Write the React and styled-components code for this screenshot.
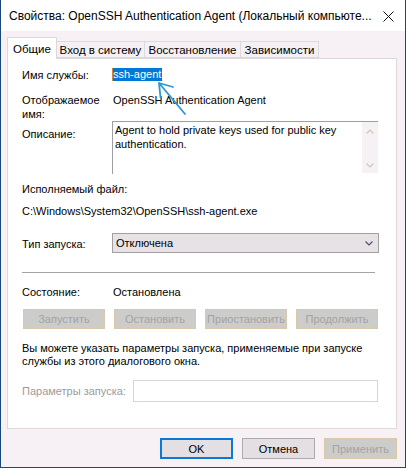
import React from 'react'
import styled, { createGlobalStyle } from 'styled-components'

const GlobalStyle = createGlobalStyle`
    html, body {
        margin: 0;
        padding: 0;
        background: #ffffff;
    }
    body {
        font-family: "Liberation Sans", Arial, sans-serif;
        font-size: 11px;
        color: #000;
    }
`

const tabs = [
    { title: 'Общие', width: 50 },
    { title: 'Вход в систему', width: 88 },
    { title: 'Восстановление', width: 96 },
    { title: 'Зависимости', width: 78 },
]

const actions = ['Запустить', 'Остановить', 'Приостановить', 'Продолжить']

function Chevron({ up, color }) {
    return (
        <svg width="8" height="5" viewBox="0 0 8 5">
            <polyline
                points={up ? '0.5,4.5 4,1 7.5,4.5' : '0.5,0.5 4,4 7.5,0.5'}
                fill="none"
                stroke={color}
                strokeWidth="1.2"
            />
        </svg>
    )
}

function App() {
    return (
        <Window>
            <GlobalStyle />
            <TitleBar>
                <Title>Свойства: OpenSSH Authentication Agent (Локальный компьюте...</Title>
                <Close>
                    <svg width="11" height="11" viewBox="0 0 11 11">
                        <path d="M0.5 0.5 L10.5 10.5 M10.5 0.5 L0.5 10.5" stroke="#111" strokeWidth="1" />
                    </svg>
                </Close>
            </TitleBar>
            <Body>
                <TabRow>
                    {tabs.map((t, i) => (
                        <Tab key={t.title} $w={t.width} $active={i === 0}>{t.title}</Tab>
                    ))}
                </TabRow>
                <Panel>
                    <Field $mt={9}>
                        <Label>Имя службы:</Label>
                        <div><Selected>ssh-agent</Selected></div>
                    </Field>
                    <Field $mt={11}>
                        <Label>Отображаемое<br />имя:</Label>
                        <Value>OpenSSH Authentication Agent</Value>
                    </Field>
                    <Field $mt={0}>
                        <Label $offset={6}>Описание:</Label>
                        <TextArea>
                            <AreaText>Agent to hold private keys used for public key authentication.</AreaText>
                            <ScrollBar>
                                <Chevron up color="#d4c6a8" />
                                <Chevron color="#d4c6a8" />
                            </ScrollBar>
                        </TextArea>
                    </Field>
                    <Line $mt={8}>Исполняемый файл:</Line>
                    <Line $mt={8}>C:\Windows\System32\OpenSSH\ssh-agent.exe</Line>
                    <Field $mt={15}>
                        <Label $offset={1} $lh={20}>Тип запуска:</Label>
                        <Combo>
                            <span>Отключена</span>
                            <Chevron color="#5b4b6e" />
                        </Combo>
                    </Field>
                    <Separator />
                    <Field $mt={12}>
                        <Label>Состояние:</Label>
                        <Value>Остановлена</Value>
                    </Field>
                    <ActionRow>
                        {actions.map(a => (
                            <DisabledButton key={a}>{a}</DisabledButton>
                        ))}
                    </ActionRow>
                    <Paragraph>
                        Вы можете указать параметры запуска, применяемые при запуске<br />
                        службы из этого диалогового окна.
                    </Paragraph>
                    <Field $mt={12} $col={111}>
                        <Label $dim $lh={22}>Параметры запуска:</Label>
                        <ParamInput />
                    </Field>
                </Panel>
                <Footer>
                    <DialogButton $primary>OK</DialogButton>
                    <DialogButton>Отмена</DialogButton>
                    <DialogButton $disabled>Применить</DialogButton>
                </Footer>
            </Body>
            <Pointer width="40" height="45" viewBox="0 0 40 45">
                <path
                    d="M8 7 L34 38 M8 7 L22 11 M8 7 L9.5 21.5"
                    fill="none"
                    stroke="#2c97d6"
                    strokeWidth="1.8"
                    strokeLinecap="round"
                />
            </Pointer>
        </Window>
    )
}

export default App

const Window = styled.div`
    position: relative;
    width: 406px;
    height: 468px;
    box-sizing: border-box;
    border: 1px solid #1b4877;
    border-top: none;
    display: flex;
    flex-direction: column;
    background: #f7f1f5;
`

const TitleBar = styled.div`
    height: 31px;
    flex: none;
    background: #ffffff;
    display: flex;
    align-items: center;
    padding-left: 8px;
    padding-right: 11px;
    font-size: 12px;
`

const Title = styled.div`
    flex: 1;
    white-space: nowrap;
    overflow: hidden;
`

const Close = styled.div`
    width: 11px;
    height: 11px;
    display: flex;
    margin-top: 1px;
`

const Body = styled.div`
    flex: 1;
    display: flex;
    flex-direction: column;
    padding: 6px 8px 8px 6px;
`

const TabRow = styled.div`
    display: flex;
    align-items: flex-end;
    height: 21px;
    position: relative;
    z-index: 1;
`

const Tab = styled.div`
    width: ${p => p.$w}px;
    box-sizing: border-box;
    height: ${p => (p.$active ? 22 : 17)}px;
    margin-bottom: ${p => (p.$active ? -1 : 0)}px;
    background: ${p => (p.$active ? '#ffffff' : '#f5f0f3')};
    border: 1px solid #dcd8db;
    border-bottom: ${p => (p.$active ? 'none' : '1px solid #dcd8db')};
    border-left: ${p => (p.$active ? '1px solid #dcd8db' : 'none')};
    display: flex;
    justify-content: center;
    padding-top: ${p => (p.$active ? 5 : 2)}px;
    line-height: 13px;
    font-size: 11.5px;
`

const Panel = styled.div`
    flex: 1;
    background: #ffffff;
    border: 1px solid #dcd8db;
    display: flex;
    flex-direction: column;
    padding: 0 18px 0 14px;
`

const Field = styled.div`
    display: grid;
    grid-template-columns: ${p => p.$col || 90}px 1fr;
    align-items: start;
    margin-top: ${p => p.$mt}px;
`

const Label = styled.div`
    line-height: ${p => p.$lh || 14}px;
    margin-top: ${p => p.$offset || 0}px;
    color: ${p => (p.$dim ? '#9c9a9c' : '#000')};
    white-space: nowrap;
`

const Value = styled.div`
    line-height: 14px;
    padding-left: 1px;
`

const Selected = styled.span`
    display: inline-block;
    background: #0078d7;
    color: #ffffff;
    line-height: 13px;
    padding: 0 1px 0 0;
    border-left: 1px solid #c98a3c;
`

const TextArea = styled.div`
    height: 53px;
    display: flex;
    border-top: 1px solid #a09ea0;
    border-left: 1px solid #a09ea0;
    box-sizing: border-box;
`

const AreaText = styled.div`
    flex: 1;
    padding: 1px 2px;
    line-height: 14px;
`

const ScrollBar = styled.div`
    width: 16px;
    background: #f6f1f4;
    display: flex;
    flex-direction: column;
    align-items: center;
    justify-content: space-between;
    padding: 7px 0 5px;
    margin-bottom: 1px;
`

const Line = styled.div`
    line-height: 14px;
    margin-top: ${p => p.$mt}px;
`

const Combo = styled.div`
    height: 20px;
    box-sizing: border-box;
    margin-right: -1px;
    border: 1px solid #a29fa3;
    background: #e6e2e6;
    display: flex;
    align-items: center;
    justify-content: space-between;
    padding: 0 5px 0 3px;
    line-height: 18px;
`

const Separator = styled.div`
    height: 1px;
    background: #a5a3a5;
    margin: 18px 3px 0 0;
`

const ActionRow = styled.div`
    display: flex;
    justify-content: space-between;
    margin: 10px 0 0 1px;
`

const DisabledButton = styled.div`
    width: 82px;
    height: 20px;
    box-sizing: border-box;
    background: #cccccb;
    border: 1px solid #d9c9a8;
    color: #a3a3a3;
    display: flex;
    align-items: center;
    justify-content: center;
`

const Paragraph = styled.div`
    margin-top: 13px;
    line-height: 13px;
`

const ParamInput = styled.div`
    height: 22px;
    box-sizing: border-box;
    border: 1px solid #d6d4d6;
    background: #ffffff;
`

const Footer = styled.div`
    display: flex;
    justify-content: flex-end;
    gap: 9px;
    margin-top: 9px;
`

const DialogButton = styled.div`
    width: 73px;
    height: 21px;
    box-sizing: border-box;
    display: flex;
    align-items: center;
    justify-content: center;
    background: ${p => (p.$disabled ? '#cccccb' : '#e3dfe3')};
    border: ${p => (p.$primary ? '2px solid #0a78d4' : p.$disabled ? '1px solid #d9c9a8' : '1px solid #adabad')};
    color: ${p => (p.$disabled ? '#a3a3a3' : '#000')};
`

const Pointer = styled.svg`
    position: absolute;
    left: 150px;
    top: 76px;
    pointer-events: none;
`
